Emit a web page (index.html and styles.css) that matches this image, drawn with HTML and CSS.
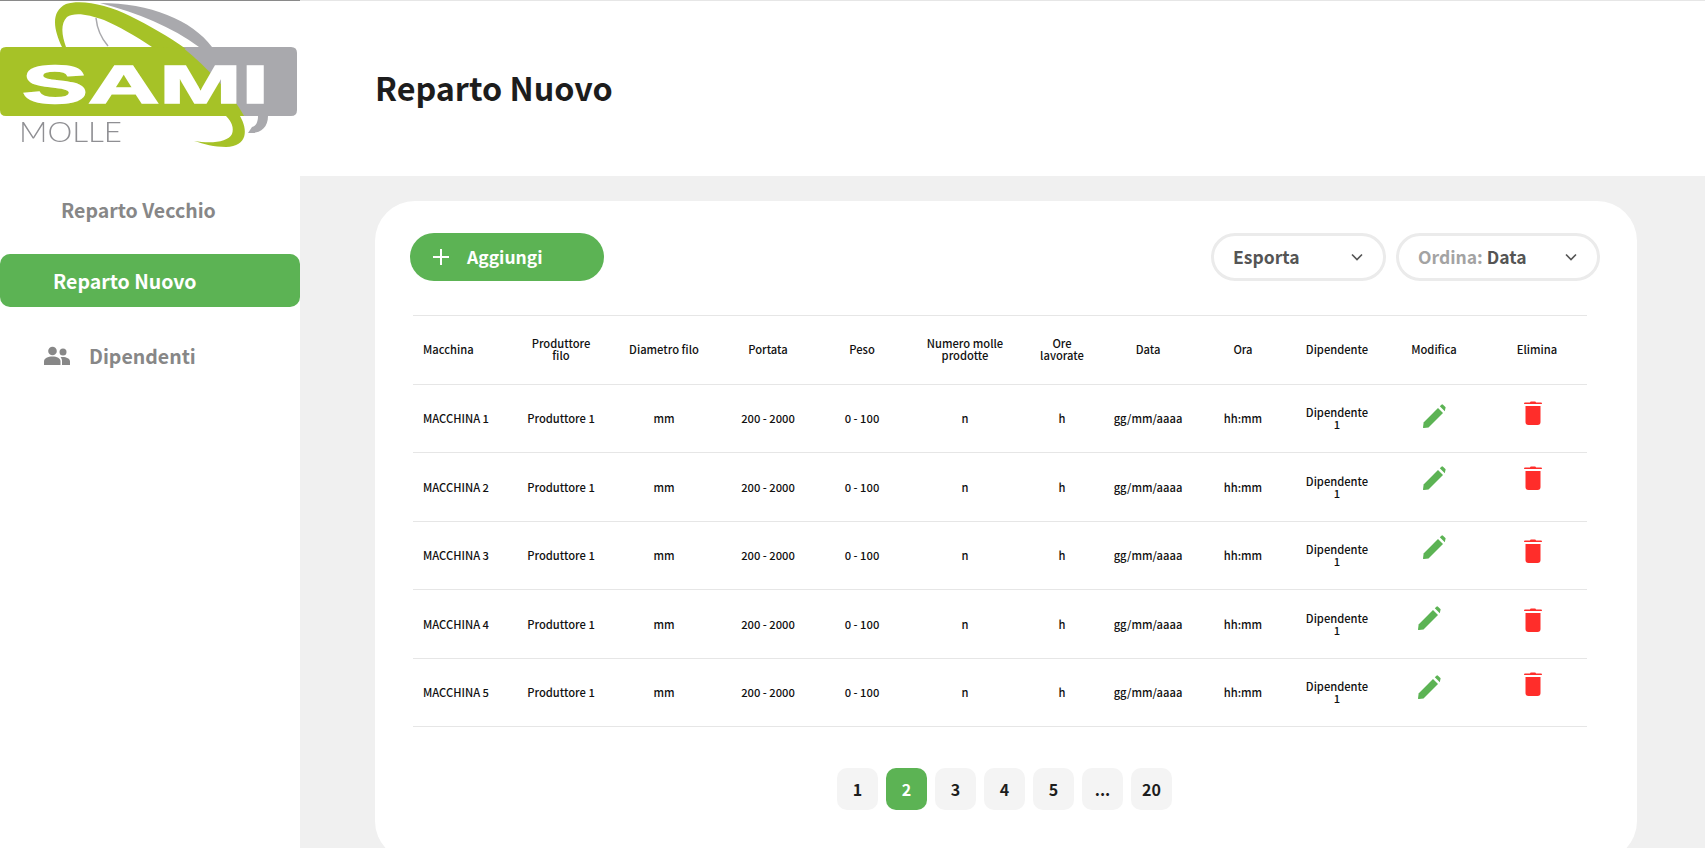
FILE: index.html
```html
<!DOCTYPE html>
<html lang="it">
<head>
  <meta charset="UTF-8">
  <meta name="viewport" content="width=device-width, initial-scale=1.0">
  <title>Reparto Nuovo</title>
  <link rel="stylesheet" href="styles.css">
</head>
<body>
  <div class="app">
    <aside class="sidebar">
      <svg class="logo" viewBox="0 0 300 176" width="300" height="176" role="img" aria-label="Sami Molle">
        <path class="logo-gray" d="M100 3 C150 3 192 20 212 47 L199 47 C172 27 138 13 100 3 Z"/>
        <path class="logo-gray" d="M170 47 H291 Q297 47 297 53 V110 Q297 116 291 116 H236 Z"/>
        <path class="logo-gray" d="M258 116 H268 C268 128 260 134 248 133 L252 127 C256 126 258 122 258 116 Z"/>
        <path class="logo-thread" d="M96 18 C97 28 101 38 108 46"/>
        <path class="logo-green" d="M6 47 H182 C208 68 232 94 244 116 H6 Q0 116 0 110 V53 Q0 47 6 47 Z"/>
        <path class="logo-green" d="M62 47 C54 30 50 12 66 4 C82 -1 108 5 130 16 C150 26 168 36 186 49 L152 47 C136 36 118 26 104 20 C88 14 74 12 67 17 C60 24 62 36 66 47 Z"/>
        <path class="logo-green" d="M226 116 H240 C248 130 248 146 226 147 C214 147 204 144 194 141 C212 144 228 142 232 134 C234 128 232 122 226 116 Z"/>
        <text class="logo-sami" x="22" y="103" textLength="247" lengthAdjust="spacingAndGlyphs">SAMI</text>
        <text class="logo-molle" x="19" y="142" textLength="103" lengthAdjust="spacingAndGlyphs">MOLLE</text>
      </svg>
      <nav class="side-nav">
        <a class="nav-item nav-old" href="#">Reparto Vecchio</a>
        <a class="nav-item nav-active" href="#">Reparto Nuovo</a>
        <a class="nav-item nav-staff" href="#">
          <svg class="nav-icon" viewBox="0 0 26 20" width="26" height="20">
            <circle cx="8.5" cy="5" r="4.3"/>
            <circle cx="19" cy="6" r="3.5"/>
            <path d="M0 19 V15.5 C0 12 4 10.5 8.5 10.5 C13 10.5 16.5 12 16.5 15.5 V19 Z"/>
            <path d="M18 19 V15 C18 13.5 17.5 12.3 16.5 11.2 C21 10.5 26 12 26 15.5 V19 Z"/>
          </svg>
          Dipendenti
        </a>
      </nav>
    </aside>

    <div class="content">
      <header class="topbar">
        <h1>Reparto Nuovo</h1>
      </header>
      <main class="main">
        <section class="card">
          <div class="toolbar">
            <button class="add-btn">
              <svg viewBox="0 0 18 18" width="18" height="18"><path d="M9 1 V17 M1 9 H17"/></svg>
              Aggiungi
            </button>
            <div class="filters">
              <div class="select select-export">
                <span>Esporta</span>
                <svg class="chevron" viewBox="0 0 12 8" width="12" height="8"><path d="M1 1.5 L6 6.5 L11 1.5"/></svg>
              </div>
              <div class="select select-sort">
                <span><span class="select-label">Ordina:</span> Data</span>
                <svg class="chevron" viewBox="0 0 12 8" width="12" height="8"><path d="M1 1.5 L6 6.5 L11 1.5"/></svg>
              </div>
            </div>
          </div>

          <table class="data-table">
            <colgroup>
              <col class="c1"><col class="c2"><col class="c3"><col class="c4"><col class="c5"><col class="c6">
              <col class="c7"><col class="c8"><col class="c9"><col class="c10"><col class="c11"><col class="c12">
            </colgroup>
            <thead>
              <tr>
                <th>Macchina</th>
                <th>Produttore<br>filo</th>
                <th>Diametro filo</th>
                <th>Portata</th>
                <th>Peso</th>
                <th>Numero molle<br>prodotte</th>
                <th>Ore<br>lavorate</th>
                <th>Data</th>
                <th>Ora</th>
                <th>Dipendente</th>
                <th>Modifica</th>
                <th>Elimina</th>
              </tr>
            </thead>
            <tbody id="rows"></tbody>
          </table>

          <div class="pagination">
            <a href="#">1</a>
            <a class="current" href="#">2</a>
            <a href="#">3</a>
            <a href="#">4</a>
            <a href="#">5</a>
            <a href="#">...</a>
            <a href="#">20</a>
          </div>
        </section>
      </main>
    </div>
  </div>

  <script>
    // icon offsets per row, the icons in this table don't sit on one line
    const rows = [
      { pen: [0, -2], bin: [-4, -5] },
      { pen: [0, -9], bin: [-4, -9] },
      { pen: [0, -8], bin: [-4, -4] },
      { pen: [-5, -6], bin: [-4, -4] },
      { pen: [-5, -5], bin: [-4, -8] }
    ];

    const penIcon = '<svg viewBox="0 0 24 24" width="24" height="24"><path d="M1 23.5 L1.6 18.4 L16 4 L21 9 L6.5 23.4 L2 24 Q1 24 1 23.5 Z"/><path d="M17.8 2.2 L19.4 0.7 Q20.2 0 21 0.7 L23.4 3.1 Q24 3.9 23.3 4.7 L22.8 7.2 Z"/></svg>';
    const binIcon = '<svg viewBox="0 0 18 24" width="18" height="24"><path d="M6 1.6 Q6 .4 7.2 .4 H10.8 Q12 .4 12 1.6 H17 Q18 1.6 18 2.4 Q18 3 17 3 H1 Q0 3 0 2.4 Q0 1.6 1 1.6 Z"/><path d="M1.5 5 H16.5 V21 Q16.5 24 13.5 24 H4.5 Q1.5 24 1.5 21 Z"/></svg>';

    const tbody = document.getElementById("rows");
    rows.forEach((row, i) => {
      const tr = document.createElement("tr");
      tr.innerHTML = `
        <td>MACCHINA ${i + 1}</td>
        <td>Produttore 1</td>
        <td>mm</td>
        <td>200 - 2000</td>
        <td>0 - 100</td>
        <td>n</td>
        <td>h</td>
        <td>gg/mm/aaaa</td>
        <td>hh:mm</td>
        <td>Dipendente<br>1</td>
        <td><span class="icon pen" style="transform: translate(${row.pen[0]}px, ${row.pen[1]}px)">${penIcon}</span></td>
        <td><span class="icon bin" style="transform: translate(${row.bin[0]}px, ${row.bin[1]}px)">${binIcon}</span></td>`;
      tbody.appendChild(tr);
    });
  </script>
</body>
</html>
```

FILE: styles.css
```css
* {
  box-sizing: border-box;
}

html, body {
  margin: 0;
  height: 100%;
  overflow: hidden;
}

body {
  font-family: "Noto Sans CJK SC", "Noto Sans", sans-serif;
  background-color: #f0f0f0;
  color: #1d1d1d;
}

.app {
  display: grid;
  grid-template-columns: 300px 1fr;
  height: 848px;
  overflow: hidden;
}

/* sidebar */
.sidebar {
  background-color: white;
  border-top: 1px solid #8a8a8a;
}

.logo {
  display: block;
  margin-top: -1px;
  filter: blur(0.6px);
}

.logo-green {
  fill: #a6c227;
}

.logo-gray {
  fill: #a9a9ad;
}

.logo-thread {
  fill: none;
  stroke: #a9a9ad;
  stroke-width: 1.5;
}

.logo-sami {
  font-family: "Liberation Sans", sans-serif;
  font-weight: bold;
  font-size: 54px;
  fill: white;
  stroke: white;
  stroke-width: 1.5px;
}

.logo-molle {
  font-family: "Lato", sans-serif;
  font-weight: 300;
  font-size: 27px;
  fill: #8f8f93;
}

.side-nav {
  display: flex;
  flex-direction: column;
}

.nav-item {
  display: flex;
  align-items: center;
  height: 53px;
  font-size: 19.5px;
  font-weight: 600;
  line-height: 1;
  color: #878787;
  text-decoration: none;
}

.nav-old {
  margin-top: 7px;
  padding-left: 61px;
}

.nav-active {
  margin-top: 18px;
  padding-left: 53px;
  background-color: #5cb354;
  border-radius: 10px;
  color: white;
}

.nav-staff {
  margin-top: 22px;
  padding-left: 44px;
  gap: 19px;
}

.nav-icon {
  fill: #878787;
}

/* top bar */
.content {
  display: flex;
  flex-direction: column;
  min-width: 0;
}

.topbar {
  height: 176px;
  flex-shrink: 0;
  padding-left: 75px;
  padding-bottom: 2px;
  display: flex;
  align-items: center;
  background-color: white;
  border-top: 1px solid #e6e6e6;
}

.topbar h1 {
  margin: 0;
  font-size: 32.3px;
  font-weight: 600;
  line-height: 1;
  color: #1d1d1d;
}

/* card */
.main {
  padding: 25px 68px 0 75px;
}

.card {
  height: 660px;
  padding: 32px 37px 0 35px;
  background-color: white;
  border-radius: 40px;
}

.toolbar {
  display: flex;
  justify-content: space-between;
  align-items: center;
}

.add-btn {
  display: flex;
  align-items: center;
  gap: 17px;
  width: 194px;
  height: 48px;
  padding: 0 22px;
  border: none;
  border-radius: 24px;
  background-color: #5cb354;
  color: white;
  font-family: inherit;
  font-size: 17.5px;
  font-weight: 700;
  line-height: 1;
}

.add-btn path {
  fill: none;
  stroke: white;
  stroke-width: 2;
}

.filters {
  display: flex;
  gap: 10px;
}

.select {
  display: flex;
  justify-content: space-between;
  align-items: center;
  height: 48px;
  padding: 0 20px 0 19px;
  border: 3px solid #ebebeb;
  border-radius: 24px;
  font-size: 17.5px;
  font-weight: 700;
  line-height: 1;
  color: #555;
}

.select-export {
  width: 175px;
}

.select-sort {
  width: 204px;
}

.select-label {
  color: #a3a3a3;
}

.chevron path {
  fill: none;
  stroke: #555;
  stroke-width: 1.6;
}

/* table */
.data-table {
  width: 1174px;
  margin: 34px 0 0 3px;
  border-collapse: collapse;
  table-layout: fixed;
  border-top: 1px solid #e6e6e6;
}

.data-table th,
.data-table td {
  height: 68.5px;
  padding: 0;
  border-bottom: 1px solid #e6e6e6;
  font-size: 11.2px;
  line-height: 12px;
  text-align: center;
  color: #111;
  font-weight: 500;
}

.data-table th {
  padding-bottom: 2px;
}

.data-table th:first-child,
.data-table td:first-child {
  padding-left: 10px;
  text-align: left;
}

.c1 { width: 102px; }
.c2 { width: 92px; }
.c3 { width: 114px; }
.c4 { width: 94px; }
.c5 { width: 94px; }
.c6 { width: 112px; }
.c7 { width: 82px; }
.c8 { width: 90px; }
.c9 { width: 100px; }
.c10 { width: 88px; }
.c11 { width: 106px; }
.c12 { width: 100px; }

.icon {
  display: inline-block;
  vertical-align: middle;
}

.icon svg {
  display: block;
}

.pen svg {
  fill: #5cb354;
}

.bin svg {
  fill: #ff2d2a;
}

/* pagination */
.pagination {
  display: flex;
  justify-content: center;
  gap: 8px;
  margin-top: 41px;
  padding-right: 1px;
}

.pagination a {
  display: flex;
  justify-content: center;
  align-items: center;
  width: 41px;
  height: 42px;
  border-radius: 10px;
  background-color: #f4f4f4;
  color: #1d1d1d;
  font-size: 16px;
  font-weight: 700;
  line-height: 1;
  text-decoration: none;
}

.pagination a.current {
  background-color: #5cb354;
  color: white;
}
```
